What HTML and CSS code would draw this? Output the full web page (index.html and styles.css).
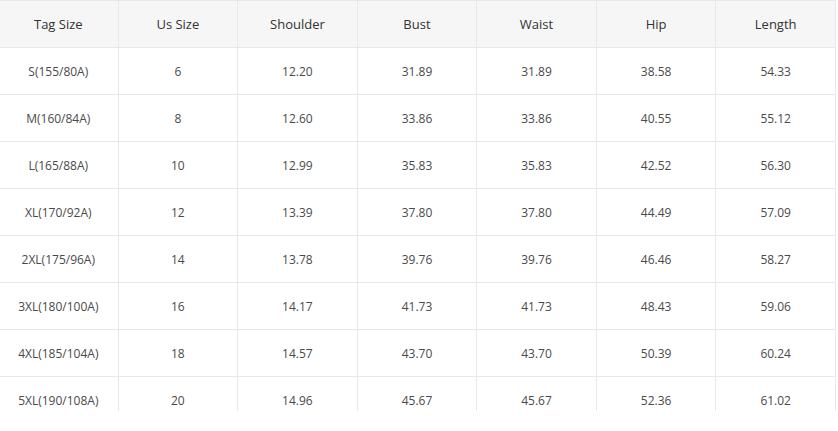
FILE: index.html
```html
<!DOCTYPE html>
<html>
<head>
<meta charset="utf-8">
<link rel="stylesheet" href="styles.css">
</head>
<body>
<div class="wrap">
<table class="size-table">
<thead>
<tr><th>Tag Size</th><th>Us Size</th><th>Shoulder</th><th>Bust</th><th>Waist</th><th>Hip</th><th>Length</th></tr>
</thead>
<tbody>
<tr><td>S(155/80A)</td><td>6</td><td>12.20</td><td>31.89</td><td>31.89</td><td>38.58</td><td>54.33</td></tr>
<tr><td>M(160/84A)</td><td>8</td><td>12.60</td><td>33.86</td><td>33.86</td><td>40.55</td><td>55.12</td></tr>
<tr><td>L(165/88A)</td><td>10</td><td>12.99</td><td>35.83</td><td>35.83</td><td>42.52</td><td>56.30</td></tr>
<tr><td>XL(170/92A)</td><td>12</td><td>13.39</td><td>37.80</td><td>37.80</td><td>44.49</td><td>57.09</td></tr>
<tr><td>2XL(175/96A)</td><td>14</td><td>13.78</td><td>39.76</td><td>39.76</td><td>46.46</td><td>58.27</td></tr>
<tr><td>3XL(180/100A)</td><td>16</td><td>14.17</td><td>41.73</td><td>41.73</td><td>48.43</td><td>59.06</td></tr>
<tr><td>4XL(185/104A)</td><td>18</td><td>14.57</td><td>43.70</td><td>43.70</td><td>50.39</td><td>60.24</td></tr>
<tr><td>5XL(190/108A)</td><td>20</td><td>14.96</td><td>45.67</td><td>45.67</td><td>52.36</td><td>61.02</td></tr>
</tbody>
</table>
</div>
</body>
</html>
```
FILE: styles.css
```css
html, body {
  margin: 0;
  padding: 0;
  background: #fff;
}
.wrap {
  width: 837px;
  height: 411px;
  overflow: hidden;
}
.size-table {
  width: 838px;
  margin-left: -2px;
  border-collapse: collapse;
  table-layout: fixed;
  font-family: "Open Sans", "Liberation Sans", sans-serif;
  font-size: 12px;
  color: #4a4a4a;
}
.size-table th,
.size-table td {
  height: 46px;
  padding: 0;
  text-align: center;
  border: 1px solid #e8e8e8;
  font-weight: normal;
}
.size-table th {
  background: #f6f6f6;
  color: #333;
  font-size: 13px;
}
```
